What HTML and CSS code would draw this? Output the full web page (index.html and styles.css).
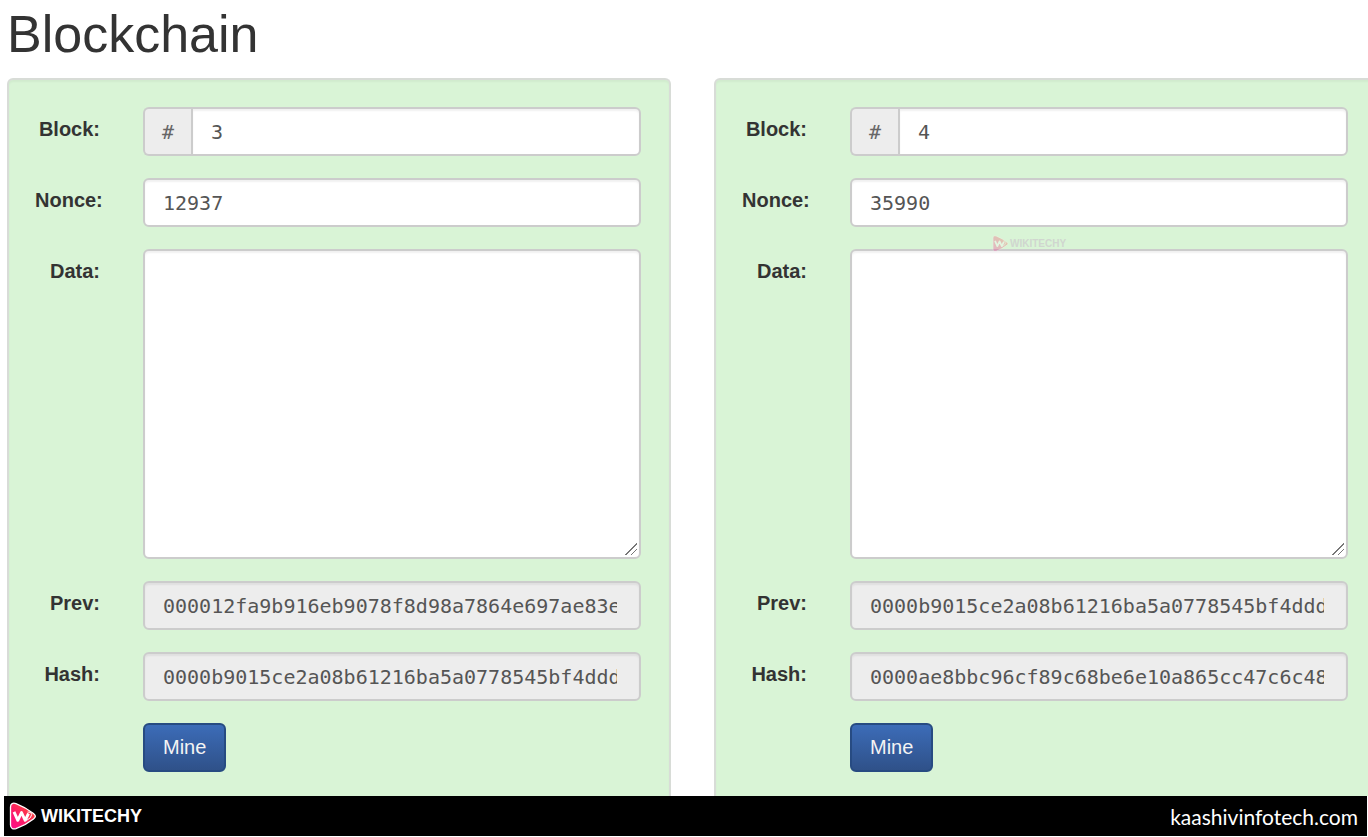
FILE: index.html
```html
<!DOCTYPE html>
<html lang="en">
<head>
<meta charset="utf-8">
<title>Blockchain</title>
<link rel="stylesheet" href="styles.css">
</head>
<body>
<svg class="defs" aria-hidden="true">
  <defs>
    <linearGradient id="play" x1="0" y1="1" x2="1" y2="0">
      <stop offset="0" stop-color="#ff0a8c"/>
      <stop offset="0.45" stop-color="#fb1f63"/>
      <stop offset="1" stop-color="#ff5a2a"/>
    </linearGradient>
    <symbol id="logo" viewBox="0 0 28 28">
      <path d="M1.500 5C1.500 1.500 4 .5 7 1.600Q17 5.500 24.500 11.500C27 13.500 27 15 24.500 17Q17 23 7 26.600C4 27.600 1.500 26.500 1.500 23Z" fill="url(#play)" stroke="#fff" stroke-width="1.300"/>
      <path d="M5 9.800L8.800 18.300L12.500 10.500L16.200 18.300L19.500 11.500" fill="none" stroke="#fff" stroke-width="2.900" stroke-linejoin="round"/>
      <path d="M18.500 10Q22.500 9.500 22.700 12.500Q22.500 16 17.500 18.500" fill="none" stroke="#fff" stroke-width="1"/>
    </symbol>
  </defs>
</svg>
<main class="page">
  <h1 class="title">Blockchain</h1>
  <div class="chain">
    <form class="block">
      <label class="label" for="block3">Block:</label>
      <div class="group"><span class="addon">#</span><input class="field" id="block3" type="text" value="3"></div>
      <label class="label" for="nonce3">Nonce:</label>
      <input class="field" id="nonce3" type="text" value="12937">
      <label class="label" for="data3">Data:</label>
      <textarea class="field area" id="data3"></textarea>
      <label class="label" for="prev3">Prev:</label>
      <input class="field hash" id="prev3" type="text" readonly value="000012fa9b916eb9078f8d98a7864e697ae83e">
      <label class="label" for="hash3">Hash:</label>
      <input class="field hash" id="hash3" type="text" readonly value="0000b9015ce2a08b61216ba5a0778545bf4ddd">
      <button class="mine" type="button">Mine</button>
    </form>
    <form class="block">
      <label class="label" for="block4">Block:</label>
      <div class="group"><span class="addon">#</span><input class="field" id="block4" type="text" value="4"></div>
      <label class="label" for="nonce4">Nonce:</label>
      <input class="field" id="nonce4" type="text" value="35990">
      <label class="label" for="data4">Data:</label>
      <textarea class="field area" id="data4"></textarea>
      <label class="label" for="prev4">Prev:</label>
      <input class="field hash" id="prev4" type="text" readonly value="0000b9015ce2a08b61216ba5a0778545bf4ddd">
      <label class="label" for="hash4">Hash:</label>
      <input class="field hash" id="hash4" type="text" readonly value="0000ae8bbc96cf89c68be6e10a865cc47c6c48">
      <button class="mine" type="button">Mine</button>
      <div class="watermark"><svg class="watermark-logo" aria-hidden="true"><use href="#logo"/></svg><span>WIKITECHY</span></div>
    </form>
  </div>
</main>
<footer class="footer">
  <div class="brand"><svg class="brand-logo" aria-hidden="true"><use href="#logo"/></svg><span>WIKITECHY</span></div>
  <span class="site">kaashivinfotech.com</span>
</footer>
</body>
</html>
```
FILE: styles.css
```css
* { box-sizing: border-box; }

body {
  margin: 0;
  height: 100vh;
  display: flex;
  flex-direction: column;
  overflow: hidden;
  background: #fff;
  color: #333;
  font-family: "Liberation Sans", Arial, sans-serif;
  font-size: 20px;
}

.defs { position: absolute; width: 0; height: 0; }

.page {
  flex: 1;
  min-height: 0;
  overflow: hidden;
  display: flex;
  flex-direction: column;
  padding: 4px 0 0 7px;
}

.title {
  margin: 0 0 14px;
  font-size: 52px;
  line-height: 60px;
  font-weight: 400;
}

.chain { flex: 1; display: flex; gap: 43px; }

.block {
  position: relative;
  flex: 0 0 calc((100vw - 40px) / 2);
  display: grid;
  grid-template-columns: 65px minmax(0, 1fr);
  column-gap: 43px;
  row-gap: 22px;
  align-content: start;
  padding: 27px 28px 0 26px;
  background: #d9f4d6;
  border: 2px solid #d8dcd7;
  border-bottom: 0;
  border-radius: 6px 6px 0 0;
  box-shadow: inset 0 2px 2px rgba(0, 0, 0, 0.04);
}

.label {
  padding-top: 8px;
  text-align: right;
  font-weight: 700;
  line-height: 28px;
}

.field {
  width: 100%;
  min-width: 0;
  height: 49px;
  padding: 0 22px 0 18px;
  border: 2px solid #ccc;
  border-radius: 6px;
  background: #fff;
  box-shadow: inset 0 2px 2px rgba(0, 0, 0, 0.06);
  color: #555;
  font-family: "DejaVu Sans Mono", monospace;
  font-size: 20px;
  outline: 0;
}

.area { display: block; height: 310px; resize: vertical; }

.area::-webkit-resizer {
  background: linear-gradient(135deg, transparent 49%, #777 49%, #777 55%, transparent 55%, transparent 72%, #777 72%, #777 78%, transparent 78%) 1px 1px / 12px 12px no-repeat;
}

.hash { background: #ededed; }

.group { display: flex; }

.addon {
  flex: 0 0 48px;
  display: flex;
  align-items: center;
  justify-content: center;
  border: 2px solid #ccc;
  border-right: 0;
  border-radius: 6px 0 0 6px;
  background: #ededed;
  color: #666;
  font-family: "DejaVu Sans Mono", monospace;
}

.group .field { border-radius: 0 6px 6px 0; }

.mine {
  grid-column: 2;
  justify-self: start;
  height: 49px;
  padding: 0 18px;
  border: 2px solid #274b82;
  border-radius: 6px;
  background: linear-gradient(#3c6cb8, #2f5189);
  color: #f4f4f4;
  font-family: inherit;
  font-size: 20px;
}

.watermark {
  position: absolute;
  top: 155px;
  left: 276px;
  display: flex;
  align-items: center;
  gap: 1px;
  color: #d0d6cf;
  font-size: 10px;
  font-weight: 700;
}

.watermark-logo { width: 17px; height: 17px; opacity: 0.25; }

.footer {
  flex: 0 0 40px;
  display: flex;
  align-items: center;
  justify-content: space-between;
  margin: 0 1px 1px 4px;
  padding: 0 9px 0 5px;
  background: #000;
  color: #fff;
}

.brand {
  display: flex;
  align-items: center;
  gap: 4px;
  font-size: 18px;
  font-weight: 700;
}

.brand-logo { width: 28px; height: 28px; }

.site { font-family: Lato, sans-serif; font-size: 21px; }
```
